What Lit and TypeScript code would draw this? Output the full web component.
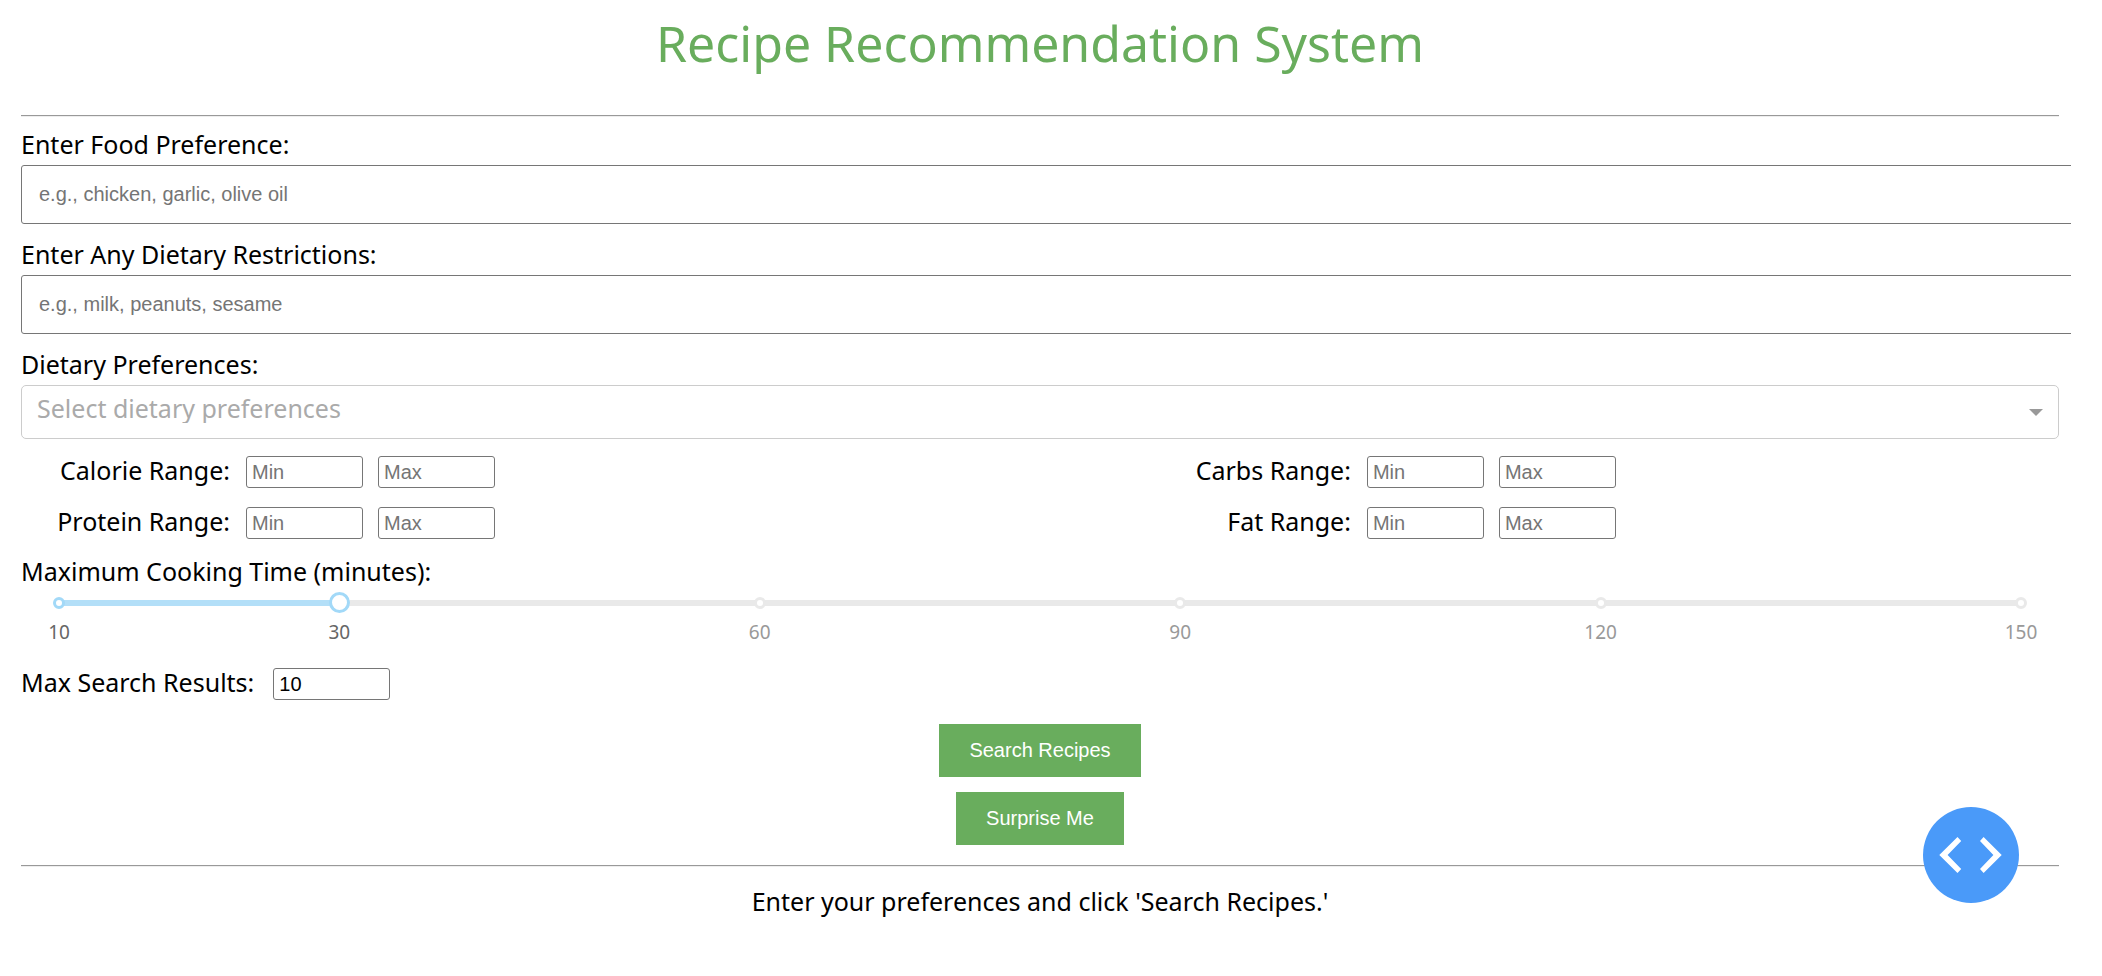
import { LitElement, html, css } from "lit";
import { customElement, state } from "lit/decorators.js";
import { classMap } from "lit/directives/class-map.js";

const MIN_TIME = 10;
const MAX_TIME = 150;
const MARKS = [10, 30, 60, 90, 120, 150];
const NUTRIENTS = [
  ["Calorie", "Carbs"],
  ["Protein", "Fat"],
];
const DIETS = ["Vegetarian", "Vegan", "Gluten-free", "Dairy-free", "Keto"];

const percent = (minutes: number) => ((minutes - MIN_TIME) / (MAX_TIME - MIN_TIME)) * 100;

@customElement("app-root")
class AppRoot extends LitElement {
  @state() private time = 30;

  static styles = css`
    :host {
      display: block;
      color: #000;
      background: #fff;
      font: 25px/30px "Noto Sans", "Open Sans", sans-serif;
    }
    * {
      box-sizing: border-box;
    }
    .page {
      margin-right: 31px;
      padding: 13px 12px 24px 21px;
      overflow: hidden;
    }
    .title {
      margin: 0 0 42px;
      font-size: 50px;
      line-height: 60px;
      font-weight: 400;
      text-align: center;
      color: #69ad5d;
    }
    .rule {
      height: 2px;
      margin: 0;
      border: 0;
      border-top: 1px solid #999;
      border-bottom: 1px solid #eee;
    }
    .form {
      padding: 12px 0 20px;
    }
    .label {
      display: block;
    }
    .field {
      margin-bottom: 15px;
    }
    .field .label,
    .diet .label {
      margin-bottom: 6px;
    }
    input {
      font: 20px/23px "Liberation Sans", Arial, sans-serif;
      color: #000;
    }
    .box {
      background: #fff;
      border: 1px solid #767676;
      border-radius: 3px;
      outline-offset: 0;
    }
    .box::placeholder {
      color: #757575;
      opacity: 1;
    }
    .wide {
      display: block;
      box-sizing: content-box;
      width: 100%;
      height: 57px;
      padding: 0 17px;
    }
    .small {
      width: 117px;
      height: 32px;
      padding: 0 5px;
      appearance: textfield;
    }
    .small::-webkit-inner-spin-button {
      appearance: none;
    }
    .diet {
      margin-bottom: 17px;
    }
    .picker {
      display: grid;
      align-items: center;
    }
    .picker > * {
      grid-area: 1 / 1;
    }
    .select {
      width: 100%;
      padding: 7px 36px 15px 15px;
      appearance: none;
      font: inherit;
      line-height: 30px;
      color: #aaa;
      background: #fff;
      border: 1px solid #ccc;
      border-radius: 5px;
    }
    .arrow {
      justify-self: end;
      width: 14px;
      height: 7px;
      margin-right: 16px;
      pointer-events: none;
    }
    .ranges {
      display: grid;
      gap: 19px;
      margin-bottom: 17px;
    }
    .row {
      display: flex;
      justify-content: space-between;
    }
    .range {
      display: flex;
      align-items: flex-start;
      gap: 15px;
      width: 45%;
    }
    .range .label,
    .results .label {
      line-height: 28px;
    }
    .range .label {
      width: 210px;
      padding-right: 1px;
      text-align: right;
    }
    .slider {
      display: grid;
      margin: 6px 38px 0;
    }
    .slider > * {
      grid-area: 1 / 1;
    }
    .rail {
      align-self: center;
      height: 6px;
      border-radius: 3px;
      background: #e9e9e9;
    }
    .filled {
      height: 6px;
      border-radius: 3px;
      background: #b3dff8;
    }
    .dots,
    .marks {
      position: relative;
    }
    .dot {
      position: absolute;
      top: 50%;
      width: 12px;
      height: 12px;
      border: 3px solid #e9e9e9;
      border-radius: 50%;
      background: #fff;
      transform: translate(-50%, -50%);
    }
    .dot.on {
      border-color: #a2d9f8;
    }
    .time {
      position: relative;
      width: calc(100% + 21px);
      height: 21px;
      margin: 0 -11px 0 -10px;
      appearance: none;
      background: transparent;
      cursor: pointer;
    }
    .time::-webkit-slider-thumb {
      appearance: none;
      width: 21px;
      height: 21px;
      border: 3px solid #a2d9f8;
      border-radius: 50%;
      background: #fff;
    }
    .marks {
      height: 20px;
      margin: 9px 38px 26px;
      font-size: 19px;
      line-height: 20px;
      color: #999;
    }
    .mark {
      position: absolute;
      transform: translateX(-50%);
    }
    .mark.on {
      color: #666;
    }
    .results {
      display: flex;
      align-items: flex-start;
      gap: 19px;
      margin-bottom: 24px;
    }
    .actions {
      display: flex;
      flex-direction: column;
      align-items: center;
      gap: 15px;
    }
    .button {
      padding: 15px 30px;
      border: 0;
      font: 20px/23px "Liberation Sans", Arial, sans-serif;
      color: #fff;
      background: #69ad5d;
      cursor: pointer;
    }
    .status {
      margin: 19px 0 0;
      text-align: center;
    }
    .devtools {
      position: fixed;
      right: 83px;
      bottom: 73px;
      width: 96px;
      height: 96px;
      padding: 0;
      border: 0;
      border-radius: 50%;
      background: #4a9af9;
      cursor: pointer;
    }
    .chevrons {
      display: block;
      fill: #fff;
    }
  `;

  private renderText(id: string, label: string, hint: string) {
    return html`
      <div class="field">
        <label class="label" for=${id}>${label}</label>
        <input class="box wide" id=${id} type="text" placeholder=${hint} />
      </div>
    `;
  }

  private renderRange(name: string) {
    const id = name.toLowerCase();
    return html`
      <div class="range">
        <label class="label" for=${`${id}-min`}>${name} Range:</label>
        <input class="box small" id=${`${id}-min`} type="number" placeholder="Min" />
        <input class="box small" type="number" placeholder="Max" aria-label=${`${name} maximum`} />
      </div>
    `;
  }

  private onTime(event: Event) {
    this.time = Number((event.target as HTMLInputElement).value);
  }

  render() {
    return html`
      <main class="page">
        <h1 class="title">Recipe Recommendation System</h1>
        <hr class="rule" />
        <form class="form" @submit=${(e: Event) => e.preventDefault()}>
          ${this.renderText("food", "Enter Food Preference:", "e.g., chicken, garlic, olive oil")}
          ${this.renderText("avoid", "Enter Any Dietary Restrictions:", "e.g., milk, peanuts, sesame")}
          <div class="diet">
            <label class="label" for="diet">Dietary Preferences:</label>
            <div class="picker">
              <select class="select" id="diet">
                <option value="" selected>Select dietary preferences</option>
                ${DIETS.map((diet) => html`<option>${diet}</option>`)}
              </select>
              <svg class="arrow" viewBox="0 0 14 7" aria-hidden="true">
                <path d="M0 0H14L7 7Z" fill="#999" />
              </svg>
            </div>
          </div>
          <div class="ranges">
            ${NUTRIENTS.map((pair) => html`<div class="row">${pair.map((name) => this.renderRange(name))}</div>`)}
          </div>
          <label class="label" for="time">Maximum Cooking Time (minutes):</label>
          <div class="slider">
            <div class="rail">
              <div class="filled" style="width:${percent(this.time)}%"></div>
            </div>
            <div class="dots">
              ${MARKS.map(
                (m) => html`<span class=${classMap({ dot: true, on: m <= this.time })} style="left:${percent(m)}%"></span>`,
              )}
            </div>
            <input
              class="time"
              id="time"
              type="range"
              min=${MIN_TIME}
              max=${MAX_TIME}
              .value=${String(this.time)}
              @input=${this.onTime}
            />
          </div>
          <div class="marks">
            ${MARKS.map(
              (m) => html`<span class=${classMap({ mark: true, on: m <= this.time })} style="left:${percent(m)}%">${m}</span>`,
            )}
          </div>
          <div class="results">
            <label class="label" for="results">Max Search Results:</label>
            <input class="box small" id="results" type="number" value="10" />
          </div>
          <div class="actions">
            <button class="button" type="submit">Search Recipes</button>
            <button class="button" type="button">Surprise Me</button>
          </div>
        </form>
        <hr class="rule" />
        <p class="status">Enter your preferences and click 'Search Recipes.'</p>
      </main>
      <button class="devtools" type="button" aria-label="Open developer tools">
        <svg class="chevrons" viewBox="0 0 96 96" width="96" height="96" aria-hidden="true">
          <path d="M16.3 48L34.5 30L38.2 33.9L24.6 48L38.2 62.1L34.5 66Z" />
          <path d="M78.7 48L60.6 30L57 33.9L70.4 48L57 62.1L60.6 66Z" />
        </svg>
      </button>
    `;
  }
}
